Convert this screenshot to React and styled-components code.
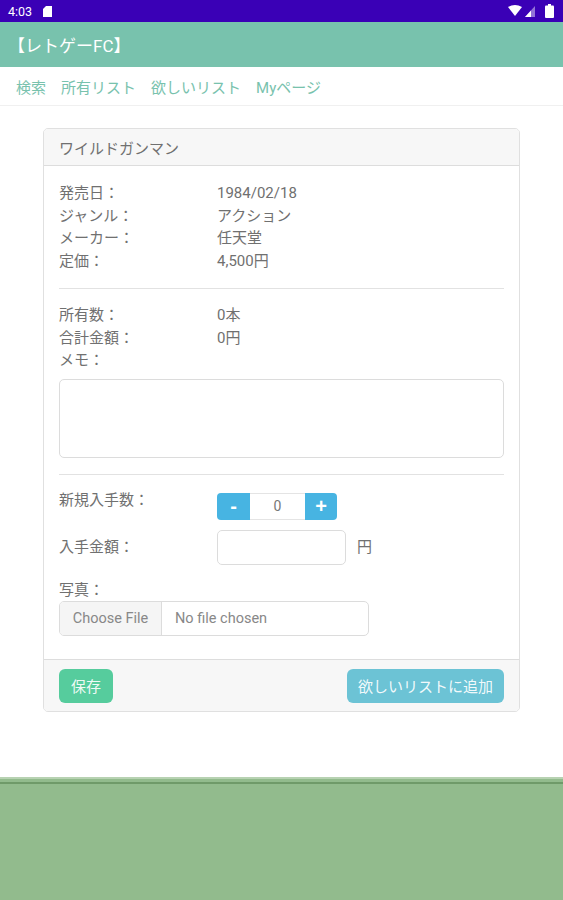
import React from "react";
import styled, { createGlobalStyle } from "styled-components";

const Global = createGlobalStyle`
  html, body { margin: 0; padding: 0; background: #fff; }
  body { font-family: Roboto, "Noto Sans CJK JP", "Noto Sans", sans-serif; color: #707070; }
  * { box-sizing: border-box; }
`;

const Screen = styled.div`
  width: 563px;
  height: 900px;
  display: flex;
  flex-direction: column;
  overflow: hidden;
`;

const StatusBar = styled.div`
  height: 22px;
  background: #3a00b6;
  display: flex;
  align-items: center;
  justify-content: space-between;
  padding: 0 9px 0 8px;
  color: #fff;
  font-size: 12.5px;
`;

const StatusLeft = styled.div`
  display: flex;
  align-items: center;
  gap: 11px;
`;

const StatusRight = styled.div`
  display: flex;
  align-items: center;
  gap: 3px;
`;

const StatusSpacer = styled.span`
  width: 4px;
`;

const AppBar = styled.div`
  height: 45px;
  background: #78c2ad;
  color: #fff;
  display: flex;
  align-items: center;
  padding-left: 8px;
  font-size: 17px;
`;

const Nav = styled.nav`
  height: 39px;
  display: flex;
  align-items: center;
  gap: 15px;
  padding-left: 16px;
  border-bottom: 1px solid #f0f0f0;
`;

const NavLink = styled.a`
  color: #78c2ad;
  font-size: 15px;
  text-decoration: none;
`;

const Content = styled.main`
  flex: 1;
  padding: 22px 43px 0;
`;

const Card = styled.section`
  border: 1px solid rgba(0, 0, 0, 0.12);
  border-radius: 5px;
  overflow: hidden;
`;

const CardHeader = styled.div`
  height: 37px;
  background: #f7f7f7;
  border-bottom: 1px solid rgba(0, 0, 0, 0.1);
  display: flex;
  align-items: center;
  padding: 0 15px;
  font-size: 15px;
`;

const CardBody = styled.div`
  padding: 16px 15px 23px;
`;

const Row = styled.div`
  display: flex;
  align-items: ${(p) => p.$align || "flex-start"};
  font-size: 15px;
  line-height: 22.5px;
  margin-top: ${(p) => p.$mt || 0}px;
`;

const Label = styled.div`
  width: 158px;
  flex-shrink: 0;
`;

const Value = styled.div``;

const Divider = styled.hr`
  border: 0;
  border-top: 1.5px solid #e2e2e2;
  margin: ${(p) => p.$top || 16}px 0 ${(p) => p.$bottom || 15}px;
`;

const Memo = styled.textarea`
  display: block;
  width: 100%;
  height: 79px;
  margin-top: 7px;
  border: 1px solid #dcdcdc;
  border-radius: 5px;
  resize: none;
  font: inherit;
`;

const Spinner = styled.div`
  display: flex;
  height: 27px;
  margin-top: 4px;
`;

const SpinButton = styled.button`
  width: ${(p) => p.$w}px;
  border: 0;
  background: #47b4e2;
  color: #fff;
  font-size: 20px;
  font-weight: 700;
  line-height: 1;
  padding: 0;
  font-family: "Liberation Sans", sans-serif;
  border-radius: ${(p) => (p.$side === "left" ? "4px 0 0 4px" : "0 4px 4px 0")};
  display: flex;
  align-items: center;
  justify-content: center;
`;

const SpinValue = styled.div`
  width: 55px;
  border-top: 1px solid #e4e4e4;
  border-bottom: 1px solid #e4e4e4;
  display: flex;
  align-items: center;
  justify-content: center;
  font-size: 14px;
  color: #777;
`;

const TextInput = styled.input`
  width: 129px;
  height: 35px;
  border: 1px solid #dcdcdc;
  border-radius: 5px;
  font: inherit;
`;

const Unit = styled.span`
  margin-left: 11px;
`;

const FileInput = styled.div`
  width: 310px;
  height: 35px;
  border: 1px solid #dcdcdc;
  border-radius: 5px;
  display: flex;
  overflow: hidden;
  font-size: 14.5px;
  color: #888;
`;

const FileButton = styled.div`
  width: 102px;
  background: #f5f5f5;
  border-right: 1px solid #dcdcdc;
  display: flex;
  align-items: center;
  justify-content: center;
`;

const FileName = styled.div`
  display: flex;
  align-items: center;
  padding-left: 13px;
`;

const CardFooter = styled.div`
  height: 52px;
  background: #f7f7f7;
  border-top: 1px solid rgba(0, 0, 0, 0.1);
  display: flex;
  align-items: center;
  justify-content: space-between;
  padding: 0 15px;
`;

const Button = styled.button`
  height: 34px;
  border: 0;
  border-radius: 6px;
  padding: 0 ${(p) => p.$px || 12}px;
  background: ${(p) => p.$bg};
  color: rgba(255, 255, 255, 0.92);
  font-family: inherit;
  font-size: 15px;
`;

const Bottom = styled.div`
  height: 123px;
  background: #92bb8d;
  border-top: 2px solid #b7d2b2;
  display: flex;
  flex-direction: column;
`;

const BottomLine = styled.div`
  margin-top: 3px;
  height: 2px;
  background: #6f9a69;
`;

function Wifi() {
  return (
    <svg width="14" height="12" viewBox="0 0 14 12">
      <path d="M0 2 Q7 -2 14 2 L7 11 Z" fill="#fff" />
    </svg>
  );
}

function Signal() {
  return (
    <svg width="10" height="11" viewBox="0 0 10 11">
      <path d="M10 0 L10 11 L0 11 Z" fill="#fff" opacity="0.45" />
      <path d="M6 4.4 L6 11 L0 11 Z" fill="#fff" />
    </svg>
  );
}

function Battery() {
  return (
    <svg width="9" height="14" viewBox="0 0 9 14">
      <rect x="3" y="0" width="3" height="2" fill="#fff" />
      <rect x="0" y="1.5" width="9" height="12.5" rx="1" fill="#fff" />
    </svg>
  );
}

function SdCard() {
  return (
    <svg width="9" height="11" viewBox="0 0 9 11">
      <path d="M3 0 L9 0 L9 11 L0 11 L0 3 Z" fill="#fff" />
    </svg>
  );
}

export default function App() {
  return (
    <Screen>
      <Global />
      <StatusBar>
        <StatusLeft>
          <span>4:03</span>
          <SdCard />
        </StatusLeft>
        <StatusRight>
          <Wifi />
          <Signal />
          <StatusSpacer />
          <Battery />
        </StatusRight>
      </StatusBar>
      <AppBar>【レトゲーFC】</AppBar>
      <Nav>
        <NavLink>検索</NavLink>
        <NavLink>所有リスト</NavLink>
        <NavLink>欲しいリスト</NavLink>
        <NavLink>Myページ</NavLink>
      </Nav>
      <Content>
        <Card>
          <CardHeader>ワイルドガンマン</CardHeader>
          <CardBody>
            <Row><Label>発売日：</Label><Value>1984/02/18</Value></Row>
            <Row><Label>ジャンル：</Label><Value>アクション</Value></Row>
            <Row><Label>メーカー：</Label><Value>任天堂</Value></Row>
            <Row><Label>定価：</Label><Value>4,500円</Value></Row>
            <Divider />
            <Row><Label>所有数：</Label><Value>0本</Value></Row>
            <Row><Label>合計金額：</Label><Value>0円</Value></Row>
            <Row><Label>メモ：</Label></Row>
            <Memo />
            <Divider $bottom={14} />
            <Row>
              <Label>新規入手数：</Label>
              <Spinner>
                <SpinButton $w={33} $side="left">-</SpinButton>
                <SpinValue>0</SpinValue>
                <SpinButton $w={32} $side="right">+</SpinButton>
              </Spinner>
            </Row>
            <Row $align="center" $mt={10}>
              <Label>入手金額：</Label>
              <TextInput />
              <Unit>円</Unit>
            </Row>
            <Row $mt={14}><Label>写真：</Label></Row>
            <FileInput>
              <FileButton>Choose File</FileButton>
              <FileName>No file chosen</FileName>
            </FileInput>
          </CardBody>
          <CardFooter>
            <Button $bg="#56cc9d" $px={12}>保存</Button>
            <Button $bg="#6cc3d5" $px={11}>欲しいリストに追加</Button>
          </CardFooter>
        </Card>
      </Content>
      <Bottom>
        <BottomLine />
      </Bottom>
    </Screen>
  );
}
